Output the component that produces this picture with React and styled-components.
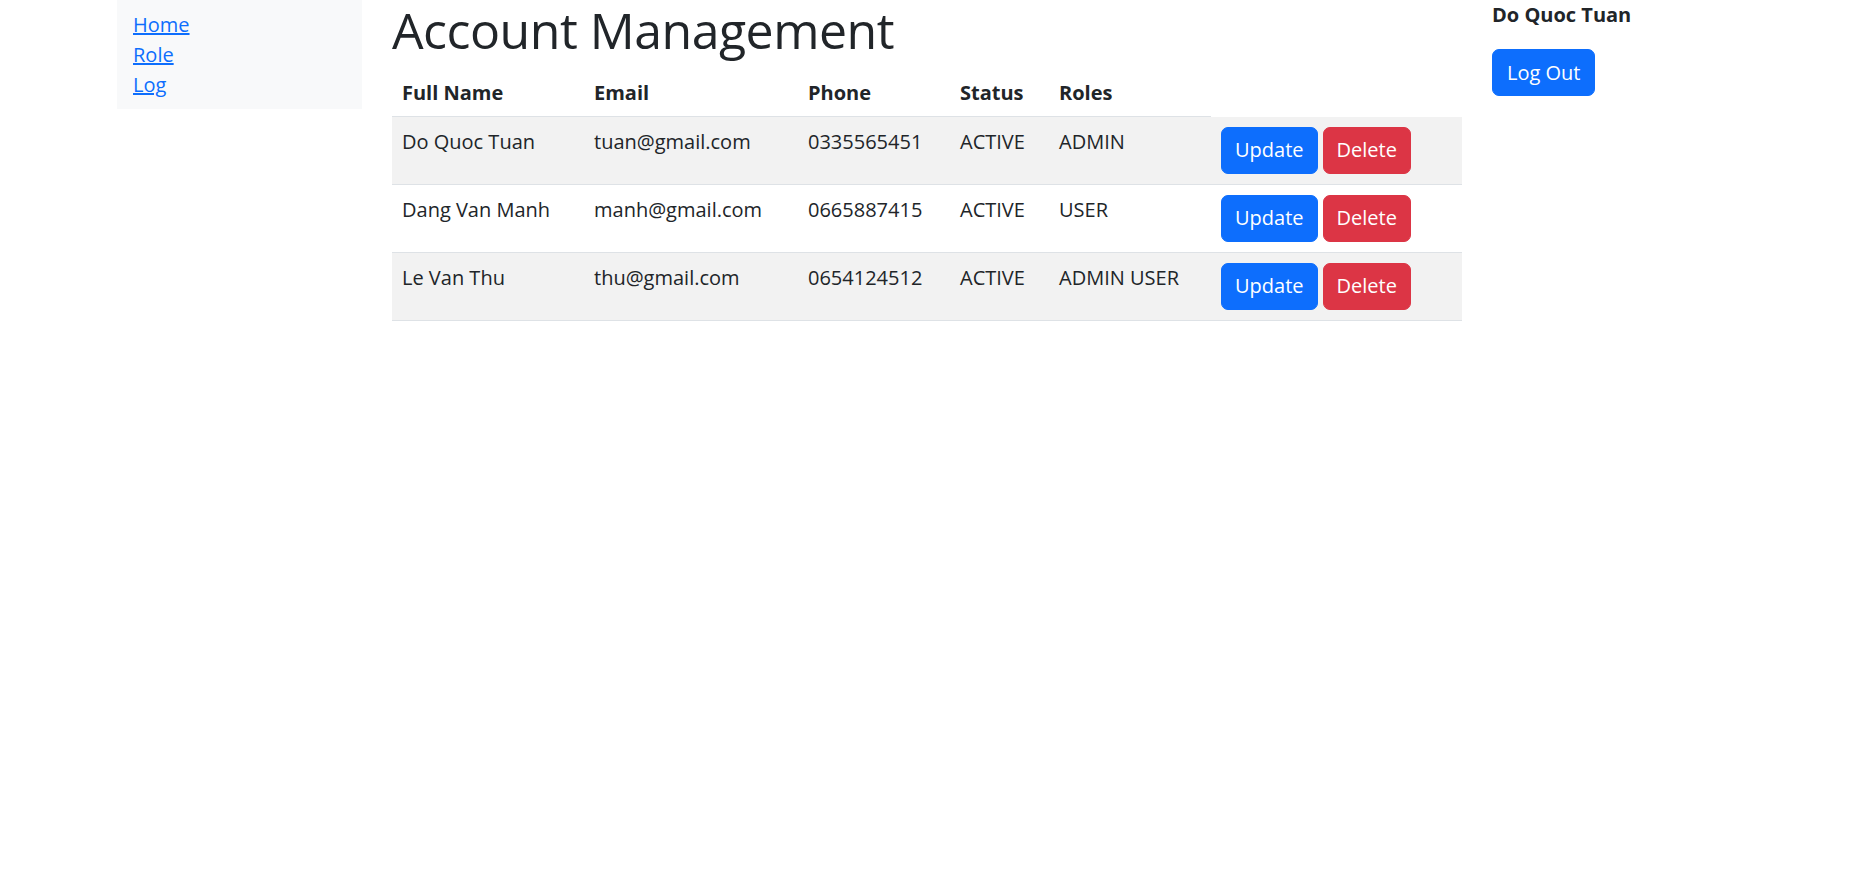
import React from "react";
import styled, { createGlobalStyle } from "styled-components";

const GlobalStyle = createGlobalStyle`
  * { box-sizing: border-box; }
  body {
    margin: 0;
    background: #fff;
    color: #212529;
    font-family: "Open Sans", "Noto Sans", sans-serif;
    font-size: 20px;
    line-height: 1.5;
  }
`;

const Page = styled.div`
  display: flex;
  align-items: flex-start;
  padding-left: 117px;
`;

const Sidebar = styled.nav`
  width: 245px;
  background: #f8f9fa;
  padding: 10px 16px 9px;
  display: flex;
  flex-direction: column;
`;

const NavLink = styled.a`
  color: #0d6efd;
  text-decoration: underline;
  line-height: 30px;
  cursor: pointer;
`;

const Main = styled.main`
  width: 1070px;
  margin-left: 30px;
`;

const Title = styled.h1`
  margin: 0 0 6px;
  font-size: 50px;
  font-weight: 500;
  line-height: 60px;
  letter-spacing: -0.5px;
  color: #212529;
`;

const Table = styled.table`
  width: 100%;
  border-collapse: collapse;
  table-layout: fixed;
`;

const Th = styled.th`
  text-align: left;
  font-weight: 700;
  padding: 12px 10px 8px;
  line-height: 30px;
  border-bottom: 1px solid #dee2e6;
`;

const Row = styled.tr`
  background: ${(p) => (p.$striped ? "#f2f2f2" : "#fff")};
`;

const Td = styled.td`
  padding: 10px;
  line-height: 30px;
  vertical-align: top;
  border-bottom: 1px solid #dee2e6;
  white-space: nowrap;
`;

const Button = styled.button`
  font-family: inherit;
  font-size: 20px;
  line-height: 30px;
  padding: 7.5px 13px;
  border: 1px solid ${(p) => p.$bg};
  background: ${(p) => p.$bg};
  color: #fff;
  border-radius: 7px;
  cursor: pointer;
  margin-right: ${(p) => (p.$gap ? "5px" : "0")};
`;

const Aside = styled.aside`
  margin-left: 30px;
  display: flex;
  flex-direction: column;
  align-items: flex-start;
`;

const UserName = styled.div`
  font-weight: 700;
  line-height: 30px;
  margin-bottom: 19px;
`;

const LogOut = styled(Button)`
  padding: 7.5px 14px;
`;

const accounts = [
  { name: "Do Quoc Tuan", email: "tuan@gmail.com", phone: "0335565451", status: "ACTIVE", roles: "ADMIN" },
  { name: "Dang Van Manh", email: "manh@gmail.com", phone: "0665887415", status: "ACTIVE", roles: "USER" },
  { name: "Le Van Thu", email: "thu@gmail.com", phone: "0654124512", status: "ACTIVE", roles: "ADMIN USER" },
];

export default function App() {
  return (
    <>
      <GlobalStyle />
      <Page>
        <Sidebar>
          <NavLink>Home</NavLink>
          <NavLink>Role</NavLink>
          <NavLink>Log</NavLink>
        </Sidebar>
        <Main>
          <Title>Account Management</Title>
          <Table>
            <colgroup>
              <col style={{ width: 192 }} />
              <col style={{ width: 214 }} />
              <col style={{ width: 152 }} />
              <col style={{ width: 99 }} />
              <col style={{ width: 162 }} />
              <col style={{ width: 251 }} />
            </colgroup>
            <thead>
              <tr>
                <Th>Full Name</Th>
                <Th>Email</Th>
                <Th>Phone</Th>
                <Th>Status</Th>
                <Th>Roles</Th>
              </tr>
            </thead>
            <tbody>
              {accounts.map((a, i) => (
                <Row key={a.email} $striped={i % 2 === 0}>
                  <Td>{a.name}</Td>
                  <Td>{a.email}</Td>
                  <Td>{a.phone}</Td>
                  <Td>{a.status}</Td>
                  <Td>{a.roles}</Td>
                  <Td>
                    <Button $bg="#0d6efd" $gap>Update</Button>
                    <Button $bg="#dc3545">Delete</Button>
                  </Td>
                </Row>
              ))}
            </tbody>
          </Table>
        </Main>
        <Aside>
          <UserName>Do Quoc Tuan</UserName>
          <LogOut $bg="#0d6efd">Log Out</LogOut>
        </Aside>
      </Page>
    </>
  );
}
